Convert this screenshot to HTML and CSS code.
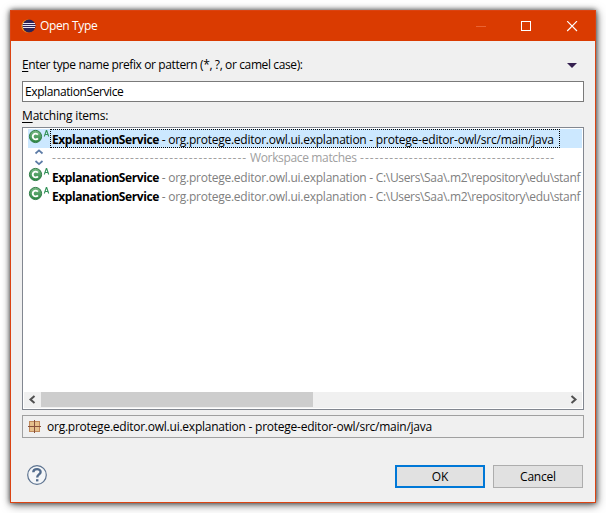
FILE: index.html
```html
<!DOCTYPE html>
<html lang="en">
<head>
<meta charset="utf-8">
<title>Open Type</title>
<link rel="stylesheet" href="styles.css">
</head>
<body>
<svg width="0" height="0" class="defs">
  <defs>
    <linearGradient id="green" x1="0" y1="0" x2="0" y2="1"><stop offset="0" stop-color="#7dbb88"/><stop offset="1" stop-color="#2a8541"/></linearGradient>
    <symbol id="class-icon" viewBox="0 0 22 19">
      <circle cx="7.500" cy="7.500" r="6.100" fill="url(#green)" stroke="#2f7d46" stroke-width="1"/>
      <path d="M9.900 5.700A2.900 2.900 0 1 0 9.900 9.300" fill="none" stroke="#fff" stroke-width="1.900"/>
      <path d="M16.300 7.500L18.300 1.500h.4l2 6M17 5.500h3" fill="none" stroke="#34935a" stroke-width="1.100"/>
    </symbol>
  </defs>
</svg>
<div class="window">
  <header class="titlebar">
    <svg class="logo" width="15" height="14" viewBox="0 0 15 14"><circle cx="7" cy="7" r="6.600" fill="#f7941e"/><circle cx="8" cy="7" r="6.500" fill="#2c2255"/><path d="M2 4.500h12M1.500 6.500h13M2 8.500h12" stroke="#e8e4f2" stroke-width="1"/></svg>
    <span class="title">Open Type</span>
    <svg class="controls" width="102" height="11" viewBox="0 0 102 11"><path d="M0 5.500h10" stroke="#ea6333"/><rect x="45.500" y=".5" width="9" height="9" fill="none" stroke="#fff"/><path d="M91.200.2l9.800 9.800M101 .2l-9.800 9.800" stroke="#fff" stroke-width="1.200"/></svg>
  </header>
  <main class="content">
    <div class="prompt"><span><u>E</u>nter type name prefix or pattern (*, ?, or camel case):</span><svg width="10" height="5" viewBox="0 0 10 5"><path d="M0 0h10L5 5z" fill="#352050"/></svg></div>
    <div class="field">ExplanationService</div>
    <div class="label"><u>M</u>atching items:</div>
    <section class="list">
      <div class="row selected"><svg class="type" width="22" height="19"><use href="#class-icon"/></svg><div class="item"><b>ExplanationService</b><span class="package"> - org.protege.editor.owl.ui.explanation - </span><span class="folder">protege-editor-owl/src/main/java</span></div></div>
      <div class="row separator"><svg class="type" width="22" height="19" viewBox="0 0 22 19"><path d="M7.500 5.500L11 2.300l3.500 3.200M7.500 13l3.500 3.200 3.500-3.200" fill="none" stroke="#5c7ba6" stroke-width="1.700"/></svg><span class="dashes">----------------------------------------</span><span class="caption">Workspace matches</span><span class="dashes">----------------------------------------</span></div>
      <div class="row"><svg class="type" width="22" height="19"><use href="#class-icon"/></svg><div class="item"><b>ExplanationService</b><span class="package"> - org.protege.editor.owl.ui.explanation - </span><span class="archive">C:\Users\Saa\.m2\repository\edu\stanf</span></div></div>
      <div class="row"><svg class="type" width="22" height="19"><use href="#class-icon"/></svg><div class="item"><b>ExplanationService</b><span class="package"> - org.protege.editor.owl.ui.explanation - </span><span class="archive">C:\Users\Saa\.m2\repository\edu\stanf</span></div></div>
      <div class="scrollbar">
        <svg width="17" height="16" viewBox="0 0 17 16"><path d="M10.500 4L6.500 7.500l4 3.500" fill="none" stroke="#505050" stroke-width="2"/></svg>
        <div class="thumb"></div>
        <svg width="17" height="16" viewBox="0 0 17 16"><path d="M6.500 4l4 3.500-4 3.500" fill="none" stroke="#505050" stroke-width="2"/></svg>
      </div>
    </section>
    <div class="status">
      <svg width="13" height="13" viewBox="0 0 13 13"><path d="M1 1h11v11H1z" fill="#c08a5c"/><path d="M2 2h4v4H2zM7 2h4v4H7zM2 7h4v4H2zM7 7h4v4H7z" fill="#e6c08c"/><path d="M6.500 0v13M0 6.500h13" stroke="#87503a"/></svg>
      <span>org.protege.editor.owl.ui.explanation - protege-editor-owl/src/main/java</span>
    </div>
    <footer class="footer">
      <svg class="help" width="20" height="20" viewBox="0 0 20 20"><circle cx="10" cy="10" r="9.300" fill="#f4f6f8" stroke="#5d7390" stroke-width="1.200"/><path d="M6.300 7.200C6.500 3.200 13.600 3.200 13.600 7c0 2.400-3.400 2.500-3.400 5.400" fill="none" stroke="#526b8c" stroke-width="2.400"/><path d="M9 14.200h2.400v2.200H9z" fill="#526b8c"/></svg>
      <div class="button primary">OK</div>
      <div class="button">Cancel</div>
    </footer>
  </main>
</div>
</body>
</html>
```
FILE: styles.css
```css
* { box-sizing: border-box; }
body {
  margin: 0;
  padding: 10px;
  height: 513px;
  overflow: hidden;
  background: #fff;
  color: #000;
  font: 12px/16px "Open Sans", "Noto Sans", sans-serif;
}
.defs { position: absolute; }
svg { display: block; flex: none; }
u { text-underline-offset: 2px; text-decoration-thickness: 1px; text-decoration-skip-ink: none; }
.window {
  width: 586px;
  height: 493px;
  border: 1px solid #db4413;
  background: #f0f0f0;
  box-shadow: 0 0 5px rgba(0, 0, 0, .65), 1px 2px 9px rgba(0, 0, 0, .5);
}
.titlebar {
  display: flex;
  align-items: center;
  height: 30px;
  padding: 0 17px 0 10px;
  background: #da3b01;
  color: #fff;
}
.title { margin-left: 4px; letter-spacing: -.37px; }
.controls { margin-left: auto; }
.content { padding: 0 11px; }
.prompt {
  display: flex;
  align-items: center;
  justify-content: space-between;
  height: 16px;
  margin-top: 16px;
  padding-right: 7px;
  letter-spacing: -.38px;
}
.field {
  height: 21px;
  margin-top: 8px;
  padding: 2px;
  border: 1px solid #7a7a7a;
  background: #fff;
  letter-spacing: -.4px;
}
.label { height: 16px; margin: 6px 0 3px; letter-spacing: -.17px; }
.list {
  display: flex;
  flex-direction: column;
  height: 283px;
  padding: 1px;
  border: 1px solid #828790;
  background: #fff;
}
.row {
  display: flex;
  height: 19px;
  margin-left: 4px;
  overflow: hidden;
  color: #808080;
  white-space: pre;
}
.selected { background: #cce8ff; color: #000; }
.item { height: 19px; padding: 2px 5px 0 1px; border: 1px dotted transparent; line-height: 15px; }
.selected .item { border-color: #000; }
.item b { color: #000; letter-spacing: -.42px; }
.package { letter-spacing: -.25px; }
.folder { letter-spacing: -.21px; }
.archive { letter-spacing: -.34px; }
.separator { line-height: 19px; color: #a0a0a0; }
.dashes { width: 200px; padding-left: 2px; letter-spacing: 1.02px; }
.caption { width: 108px; letter-spacing: -.35px; }
.scrollbar { display: flex; height: 16px; margin-top: auto; background: #f0f0f0; }
.thumb { width: 272px; height: 15px; margin-right: auto; background: #cdcdcd; }
.status {
  display: flex;
  align-items: center;
  gap: 6px;
  height: 23px;
  margin-top: 5px;
  padding-left: 5px;
  border: 1px solid #a0a0a0;
  letter-spacing: -.24px;
}
.footer { display: flex; gap: 8px; margin-top: 27px; padding: 0 1px 0 5px; }
.help { margin-right: auto; }
.button {
  width: 90px;
  height: 23px;
  border: 1px solid #adadad;
  background: #e1e1e1;
  line-height: 22px;
  text-align: center;
  letter-spacing: -.2px;
}
.primary { border: 2px solid #0078d7; line-height: 20px; }
```
